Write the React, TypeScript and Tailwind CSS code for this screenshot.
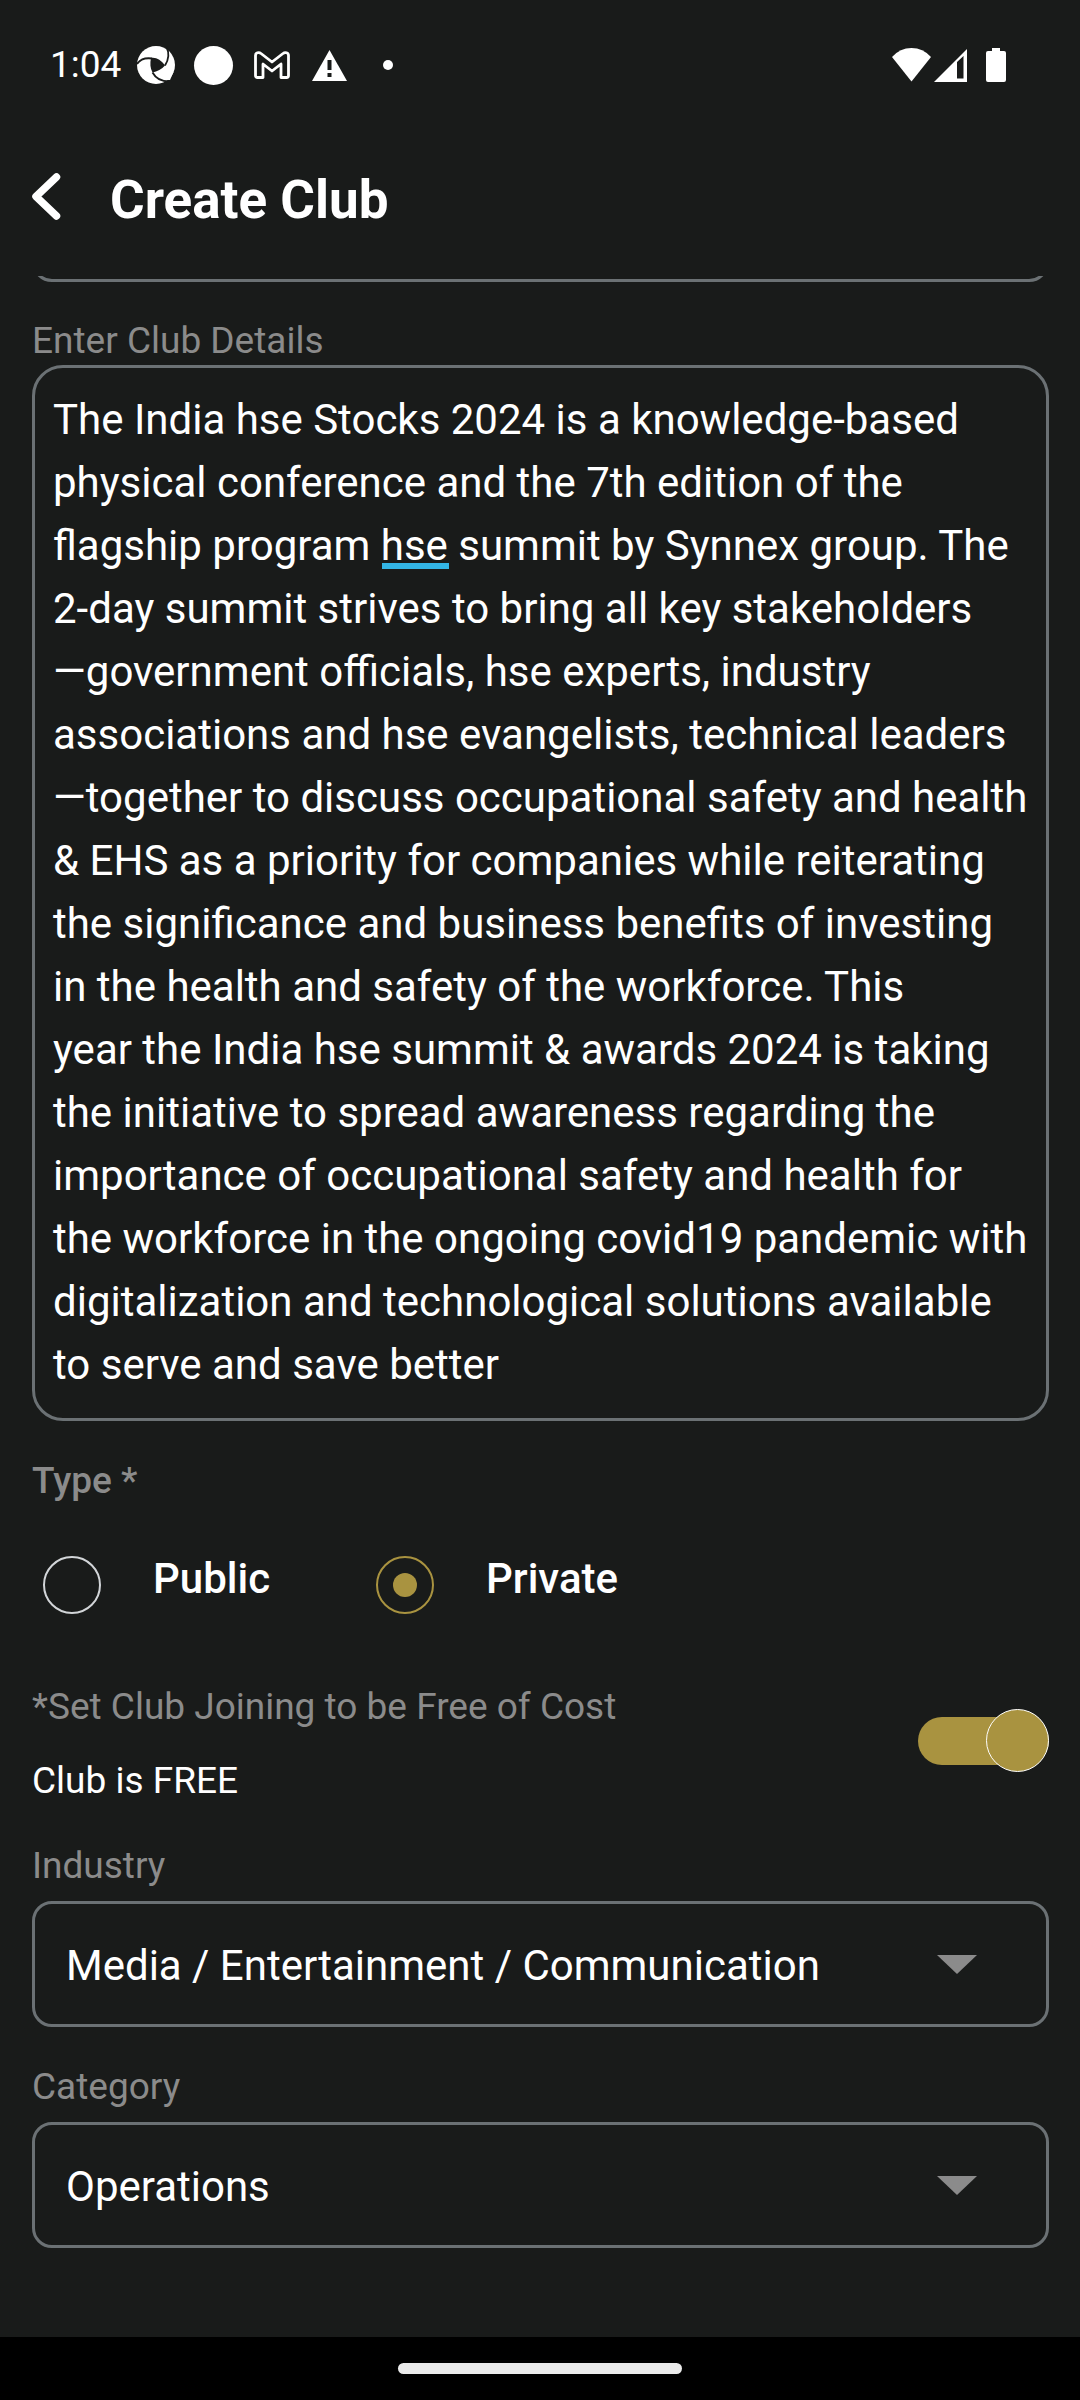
import { useState } from "react";

const DETAILS =
  "The India hse Stocks 2024 is a knowledge-based physical conference and the 7th edition of the flagship program hse summit by Synnex group. The 2-day summit strives to bring all key stakeholders—\u2060government officials, hse experts, industry associations and hse evangelists, technical leaders—\u2060together to discuss occupational safety and health & EHS as a priority for companies while reiterating the significance and business benefits of investing in the health and safety of the workforce. This year\u00a0the\u00a0India hse summit & awards 2024 is taking the initiative to spread awareness regarding the importance of occupational safety and health for the workforce in the ongoing covid19 pandemic with digitalization and technological solutions available to serve and save better";

function StatusBar() {
  return (
    <div className="flex h-[130px] items-center justify-between pl-[50px] pr-[74px]">
      <div className="flex items-center">
        <span className="w-[87px] text-[37px] leading-[44px]">1:04</span>
        <svg className="h-[38px] w-[38px]" viewBox="0 0 38 38" aria-hidden="true">
          <circle cx="19" cy="19" r="19" fill="#fff" />
          <path d="M14 12C19 11 24 14 28 19.500C25 23 20 25.500 15.500 26.500C13 22 13 17 14 12Z" fill="#191b1a" />
          <g fill="none" stroke="#191b1a" strokeWidth="1.800">
            <path d="M0 18C3 13.500 8 11.500 15 12.500" />
            <path d="M29.500 1C32.500 7 32 13 28 19.500" />
            <path d="M15.500 26.500C18 31 23 35.500 32 35.500" />
          </g>
          <path d="M29 37L38 28V38H29Z" fill="#191b1a" />
          <path d="M28 34L36.500 26L33 34Z" fill="#fff" />
        </svg>
        <span className="ml-[19px] h-[39px] w-[39px] rounded-full bg-white" />
        <svg className="ml-[21px] h-[28px] w-[36px]" viewBox="0 0 36 28" fill="none" stroke="#fff" strokeWidth="2.800" strokeLinejoin="round" aria-hidden="true">
          <path d="M1.500 4.500C1.500 1.500 5 .8 7 2.500L18 11L29 2.500C31 .8 34.500 1.500 34.500 4.500V24.500Q34.500 26.500 32.500 26.500H27V13L18 20L9 13V26.500H3.500Q1.500 26.500 1.500 24.500Z" />
        </svg>
        <svg className="ml-[22px] h-[31px] w-[35px]" viewBox="0 0 35 31" aria-hidden="true">
          <path d="M17.500 0L35 31H0Z" fill="#fff" />
          <path d="M15.500 10h4v10h-4zM15.500 23h4v4h-4z" fill="#191b1a" />
        </svg>
        <span className="ml-9 h-[10px] w-[10px] rounded-full bg-white" />
      </div>
      <div className="flex items-center">
        <svg className="h-[34px] w-[39px]" viewBox="0 0 39 34" aria-hidden="true">
          <path d="M0 9Q8 0 19.500 0T39 9L19.500 33.500Z" fill="#fff" />
        </svg>
        <svg className="ml-[3px] h-[34px] w-[33px]" viewBox="0 0 33 34" aria-hidden="true">
          <path fillRule="evenodd" d="M33 1V34H0ZM23 14V30.500H29.500V8Z" fill="#fff" />
        </svg>
        <svg className="ml-[19px] h-[34px] w-[20px]" viewBox="0 0 20 34" aria-hidden="true">
          <path d="M6 0H14V3H18Q20 3 20 5V32Q20 34 18 34H2Q0 34 0 32V5Q0 3 2 3H6Z" fill="#fff" />
        </svg>
      </div>
    </div>
  );
}

function RadioOption({ label, checked, onSelect }: { label: string; checked: boolean; onSelect: () => void }) {
  return (
    <label className="flex w-[333px] items-start gap-[52px]">
      <span className="mt-0.5 grid h-[58px] w-[58px] shrink-0 place-items-center">
        <input
          type="radio"
          name="club-type"
          checked={checked}
          onChange={onSelect}
          className="peer col-start-1 row-start-1 h-[58px] w-[58px] appearance-none rounded-full border-2 border-[#d2d5d8] checked:border-[#a99340]"
        />
        <span className="col-start-1 row-start-1 hidden h-6 w-6 rounded-full bg-[#a99340] peer-checked:block" />
      </span>
      <span className="text-[42px] font-medium leading-[50px]">{label}</span>
    </label>
  );
}

function SelectField({ id, label, options }: { id: string; label: string; options: string[] }) {
  return (
    <div className="flex flex-col gap-[13px]">
      <label htmlFor={id} className="text-[37px] leading-[44px] text-[#8b8b8b]">
        {label}
      </label>
      <div className="grid items-center">
        <select
          id={id}
          className="col-start-1 row-start-1 h-[126px] w-full appearance-none rounded-[20px] border-3 border-[#6b7174] bg-[#191b1a] pl-[31px] pr-32 pt-[3px] text-[42px] leading-[50px] text-white"
        >
          {options.map((option) => (
            <option key={option}>{option}</option>
          ))}
        </select>
        <svg className="pointer-events-none col-start-1 row-start-1 mr-[72px] h-5 w-10 justify-self-end" viewBox="0 0 40 20" aria-hidden="true">
          <path d="M0 1H40L20 20Z" fill="#8b8b8b" />
        </svg>
      </div>
    </div>
  );
}

export default function App() {
  const [type, setType] = useState("Private");
  const [free, setFree] = useState(true);
  const [details, setDetails] = useState(DETAILS);

  return (
    <div className="flex min-h-screen flex-col bg-[#191b1a] font-[Roboto,sans-serif] text-white">
      <StatusBar />
      <header className="flex h-[146px] items-start gap-[49px] px-8 pt-[39px]">
        <button type="button" aria-label="Back" className="mt-1">
          <svg className="h-[47px] w-[29px]" viewBox="0 0 29 47" fill="none" stroke="#fff" strokeWidth="7.500" strokeLinecap="round" strokeLinejoin="round" aria-hidden="true">
            <path d="M24.500 4L4 23.500L24.500 43" />
          </svg>
        </button>
        <h1 className="text-[53px] font-bold leading-[62px]">Create Club</h1>
      </header>

      <main className="flex grow flex-col pl-8 pr-[31px]">
        <div className="flex h-1.5 items-end overflow-hidden">
          <input aria-label="Club name" className="h-[126px] w-full shrink-0 rounded-[20px] border-3 border-[#6b7174] bg-transparent px-8" />
        </div>

        <label htmlFor="details" className="mt-[37px] text-[37px] leading-[44px] text-[#8b8b8b]">
          Enter Club Details
        </label>
        <div className="relative mt-0.5 flex">
          <textarea
            id="details"
            rows={16}
            spellCheck={false}
            value={details}
            onChange={(e) => setDetails(e.target.value)}
            className="w-full resize-none overflow-hidden rounded-[31px] border-3 border-[#6b7174] bg-transparent pb-[22px] pl-[18px] pr-4 pt-5 text-[42px] leading-[63px]"
          />
          {details === DETAILS && <span className="absolute left-[350px] top-[198px] h-1.5 w-[67px] bg-[#33b5e5]" />}
        </div>

        <fieldset className="mt-[38px] flex flex-col">
          <legend className="text-[37px] font-medium leading-[44px] text-[#8b8b8b]">Type *</legend>
          <div className="mt-[51px] flex pl-[11px]">
            {["Public", "Private"].map((name) => (
              <RadioOption key={name} label={name} checked={type === name} onSelect={() => setType(name)} />
            ))}
          </div>
        </fieldset>

        <div className="mt-[71px] flex items-start justify-between">
          <div className="flex flex-col gap-[30px] text-[37px] leading-[44px]">
            <label htmlFor="free" className="text-[#8b8b8b]">
              *Set Club Joining to be Free of Cost
            </label>
            <p>{free ? "Club is FREE" : "Club is PAID"}</p>
          </div>
          <span className="mt-6 grid w-[131px] items-center">
            <input
              id="free"
              type="checkbox"
              role="switch"
              checked={free}
              onChange={(e) => setFree(e.target.checked)}
              className="peer col-start-1 row-start-1 h-12 w-full appearance-none rounded-full bg-[#6b7174] checked:bg-[#a99340]"
            />
            <span className="pointer-events-none col-start-1 row-start-1 h-[63px] w-[63px] rounded-full border border-white bg-[#a99340] peer-checked:justify-self-end" />
          </span>
        </div>

        <div className="mb-[89px] mt-[41px] flex flex-col gap-[38px]">
          <SelectField id="industry" label="Industry" options={["Media / Entertainment / Communication"]} />
          <SelectField id="category" label="Category" options={["Operations"]} />
        </div>
      </main>

      <footer className="flex h-[63px] items-center justify-center bg-black">
        <span className="h-[11px] w-[284px] rounded-full bg-[#ebebeb]" />
      </footer>
    </div>
  );
}
